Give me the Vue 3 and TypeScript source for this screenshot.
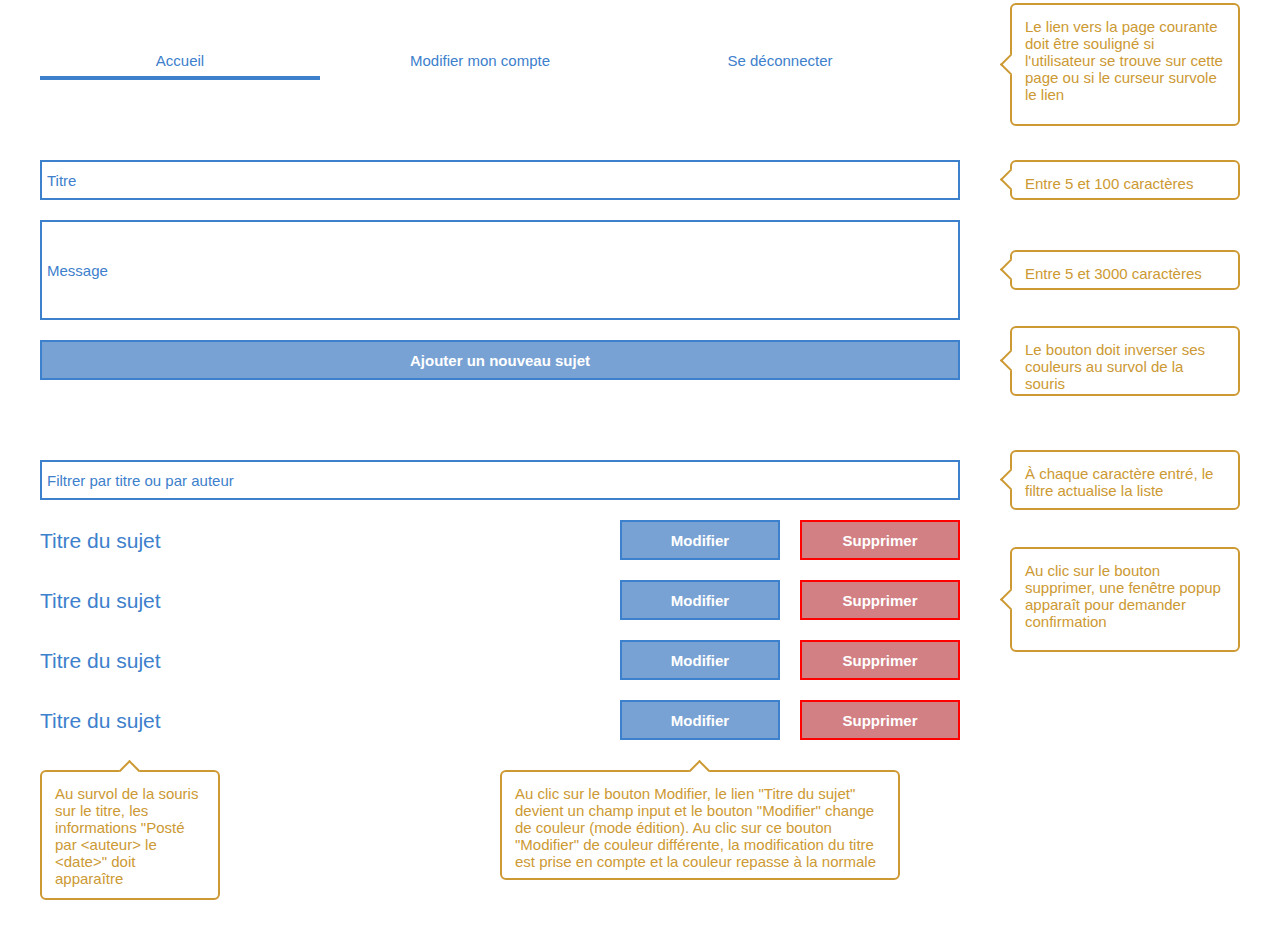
<script setup lang="ts">
import { computed, ref } from 'vue'

interface Topic {
  id: number
  title: string
}

const links: string[] = ['Accueil', 'Modifier mon compte', 'Se déconnecter']
const current = ref('Accueil')

const title = ref('')
const message = ref('')
const filter = ref('')

const topics = ref<Topic[]>([1, 2, 3, 4].map((id) => ({ id, title: 'Titre du sujet' })))

const visibleTopics = computed(() =>
  topics.value.filter((t) => t.title.toLowerCase().includes(filter.value.toLowerCase())),
)

function addTopic(): void {
  if (title.value.length < 5) return
  topics.value.unshift({ id: Date.now(), title: title.value })
  title.value = ''
  message.value = ''
}

function removeTopic(id: number): void {
  if (window.confirm('Supprimer ?')) {
    topics.value = topics.value.filter((t) => t.id !== id)
  }
}
</script>

<template>
  <div class="page">
    <main class="content">
      <nav class="nav">
        <a
          v-for="link in links"
          :key="link"
          href="#"
          class="nav-link"
          :class="{ active: link === current }"
          @click.prevent="current = link"
          >{{ link }}</a
        >
      </nav>

      <form class="form" @submit.prevent="addTopic">
        <input v-model="title" class="field" type="text" placeholder="Titre" aria-label="Titre" />
        <textarea v-model="message" class="field area" placeholder="Message" aria-label="Message"></textarea>
        <button class="btn" type="submit">Ajouter un nouveau sujet</button>
      </form>

      <section class="topics">
        <input
          v-model="filter"
          class="field"
          type="text"
          placeholder="Filtrer par titre ou par auteur"
          aria-label="Filtrer par titre ou par auteur"
        />
        <ul class="list">
          <li v-for="topic in visibleTopics" :key="topic.id" class="topic">
            <a href="#" class="topic-title" @click.prevent>{{ topic.title }}</a>
            <button class="btn action" type="button">Modifier</button>
            <button class="btn action danger" type="button" @click="removeTopic(topic.id)">Supprimer</button>
          </li>
        </ul>
      </section>

      <div class="bottom-notes">
        <p class="note up note-title">
          Au survol de la souris sur le titre, les informations "Posté par &lt;auteur&gt; le &lt;date&gt;" doit
          apparaître
        </p>
        <p class="note up note-edit">
          Au clic sur le bouton Modifier, le lien "Titre du sujet" devient un champ input et le bouton "Modifier"
          change de couleur (mode édition). Au clic sur ce bouton "Modifier" de couleur différente, la modification
          du titre est prise en compte et la couleur repasse à la normale
        </p>
      </div>
    </main>

    <aside class="side">
      <p class="note note-nav">
        Le lien vers la page courante doit être souligné si l'utilisateur se trouve sur cette page ou si le curseur
        survole le lien
      </p>
      <p class="note note-field">Entre 5 et 100 caractères</p>
      <p class="note note-message">Entre 5 et 3000 caractères</p>
      <p class="note note-button">Le bouton doit inverser ses couleurs au survol de la souris</p>
      <p class="note note-filter">À chaque caractère entré, le filtre actualise la liste</p>
      <p class="note note-delete">
        Au clic sur le bouton supprimer, une fenêtre popup apparaît pour demander confirmation
      </p>
    </aside>
  </div>
</template>

<style>
body {
  margin: 0;
  background: #fff;
}
</style>

<style scoped>
.page {
  --blue: #3d80cc;
  --blue-fill: #78a2d4;
  --red: #f00;
  --red-fill: #d28084;
  --gold: #c93;
  display: grid;
  grid-template-columns: minmax(0, 1fr) 230px;
  column-gap: 50px;
  padding: 0 40px;
  font: 15px/17px 'Liberation Sans', Arial, sans-serif;
  color: var(--blue);
}

.content {
  padding: 40px 0;
}

.nav {
  display: grid;
  grid-template-columns: repeat(3, 1fr);
  gap: 20px;
  margin-right: 40px;
}

.nav-link {
  display: flex;
  justify-content: center;
  align-items: center;
  box-sizing: border-box;
  height: 40px;
  border: solid transparent;
  border-width: 4px 0;
  color: inherit;
  text-decoration: none;
}

.nav-link.active,
.nav-link:hover {
  border-bottom-color: var(--blue);
}

.form {
  display: flex;
  flex-direction: column;
  gap: 20px;
  margin-top: 80px;
}

.field {
  display: block;
  box-sizing: border-box;
  width: 100%;
  height: 40px;
  margin: 0;
  padding: 0 5px;
  border: 2px solid var(--blue);
  border-radius: 0;
  outline: none;
  background: #fff;
  color: var(--blue);
  font: inherit;
}

.field::placeholder {
  color: var(--blue);
  opacity: 1;
}

.area {
  height: 100px;
  padding: 40px 5px 0;
  resize: none;
}

.btn {
  box-sizing: border-box;
  height: 40px;
  padding: 0 10px;
  border: 2px solid var(--blue);
  border-radius: 0;
  background: var(--blue-fill);
  color: #fff;
  font: inherit;
  font-weight: bold;
  cursor: pointer;
}

.btn:hover {
  background: #fff;
  color: var(--blue);
}

.action {
  width: 160px;
}

.danger {
  border-color: var(--red);
  background: var(--red-fill);
}

.danger:hover {
  color: var(--red);
}

.topics {
  margin-top: 80px;
}

.list {
  display: flex;
  flex-direction: column;
  gap: 20px;
  margin: 20px 0 0;
  padding: 0;
  list-style: none;
}

.topic {
  display: flex;
  align-items: center;
  gap: 20px;
}

.topic-title {
  flex: 1;
  padding-top: 2px;
  color: inherit;
  font-size: 21px;
  line-height: 24px;
  text-decoration: none;
}

.bottom-notes {
  display: flex;
  justify-content: space-between;
  align-items: flex-start;
  margin: 30px 60px 0 0;
}

.side {
  display: flex;
  flex-direction: column;
}

.note {
  position: relative;
  box-sizing: border-box;
  margin: 0;
  padding: 13px 13px 0;
  border: 2px solid var(--gold);
  border-radius: 6px;
  color: var(--gold);
}

/* Pointer: a rotated square whose inner half hides the note's own border. */
.note::before {
  content: '';
  position: absolute;
  box-sizing: border-box;
  width: 15px;
  height: 15px;
  top: calc(50% - 8px);
  left: -9px;
  border: solid var(--gold);
  border-width: 0 0 2px 2px;
  background: #fff;
  transform: rotate(45deg);
}

.note.up::before {
  top: -9px;
  left: calc(50% - 8px);
  border-width: 2px 0 0 2px;
}

.note-title {
  width: 180px;
  min-height: 130px;
}

.note-edit {
  width: 400px;
  min-height: 110px;
}

.note-nav {
  min-height: 123px;
  margin-top: 3px;
}

.note-field {
  min-height: 40px;
  margin-top: 34px;
}

.note-message {
  min-height: 40px;
  margin-top: 50px;
}

.note-button {
  min-height: 70px;
  margin-top: 36px;
}

.note-filter {
  min-height: 60px;
  margin-top: 54px;
}

.note-delete {
  min-height: 105px;
  margin-top: 37px;
}
</style>
